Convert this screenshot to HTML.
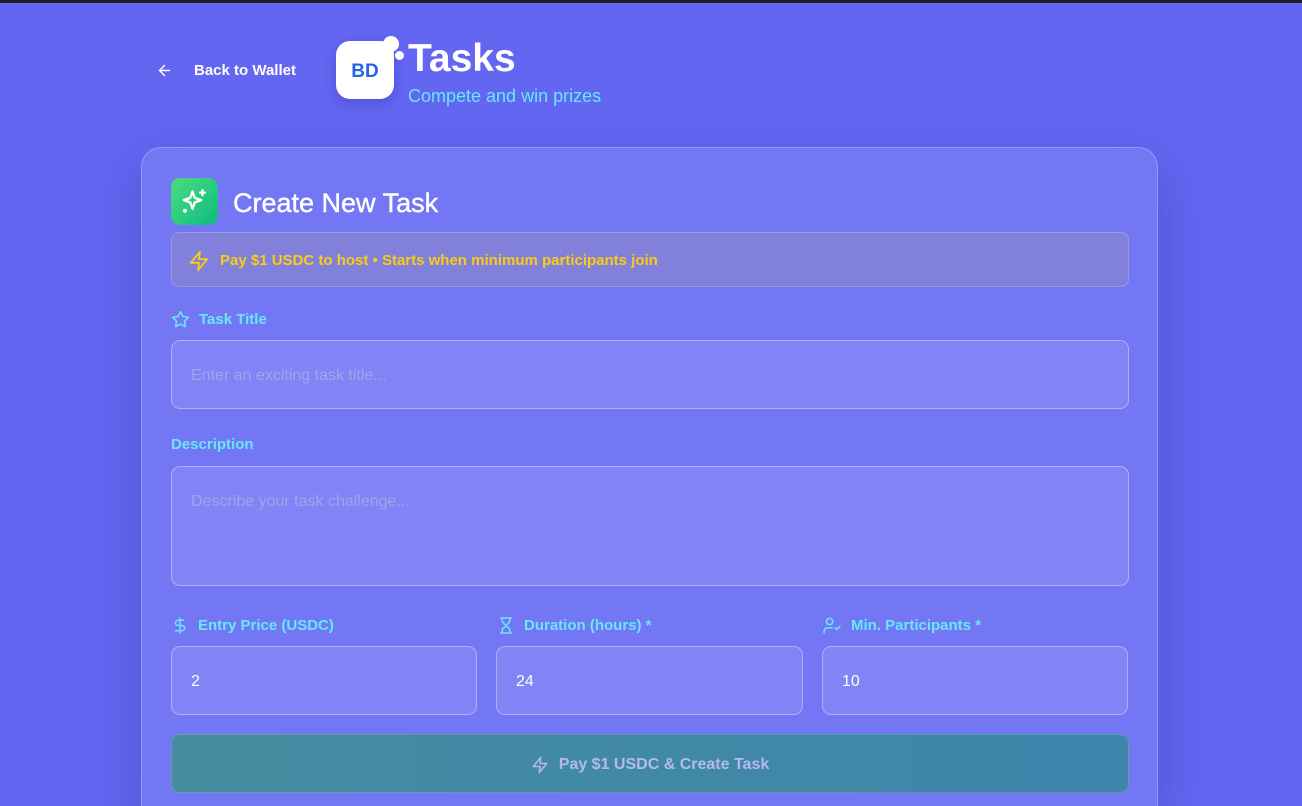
<!DOCTYPE html>
<html style="width:1302px;height:806px;overflow:hidden"><head><meta charset="utf-8"><style>
*{box-sizing:border-box;margin:0;padding:0}
body{width:1302px;height:806px;overflow:hidden;background:#6366f1;font-family:"Liberation Sans",sans-serif;position:relative}
.top{position:absolute;left:0;top:0;width:1302px;height:3px;background:#1f1f23}
.back{position:absolute;left:156px;top:62px;color:#fff;font-size:15px;font-weight:bold;display:flex;align-items:center}
.back svg{margin-right:21px}
.logo{position:absolute;left:336px;top:41px;width:58px;height:58px;background:#fff;border-radius:14px;box-shadow:0 4px 12px rgba(50,40,160,.35);color:#2563eb;font-weight:bold;font-size:19px;display:flex;align-items:center;justify-content:center;padding-top:3px}
.dot1{position:absolute;left:383px;top:36px;width:16px;height:16px;border-radius:50%;background:#fff}
.dot2{position:absolute;left:395px;top:51px;width:9px;height:9px;border-radius:50%;background:#fff}
.title{position:absolute;left:408px;top:37px;color:#fff;font-weight:bold;font-size:39px}
.sub{position:absolute;left:408px;top:86px;color:#67e8f9;font-size:18px}
.card{position:absolute;left:141px;top:147px;width:1017px;height:659px;background:#7377f3;border:1px solid rgba(255,255,255,.25);border-bottom:none;border-radius:20px 20px 0 0;box-shadow:0 20px 50px rgba(40,30,150,.3)}
.ico{position:absolute;left:171px;top:178px;width:47px;height:47px;border-radius:9px;background:linear-gradient(135deg,#4ade80,#10b981);display:flex;align-items:center;justify-content:center}
.h{position:absolute;left:233px;top:188px;color:#fff;font-size:27px;-webkit-text-stroke:.4px #fff}
.note{position:absolute;left:171px;top:232px;width:958px;height:55px;border:1px solid rgba(255,255,255,.2);background:#8180db;border-radius:8px;color:#facc15;font-weight:bold;font-size:15px;display:flex;align-items:center;padding-left:16px;padding-top:2px}
.note svg{margin-right:10px}
.lbl{position:absolute;color:#67e8f9;font-weight:bold;font-size:15px;display:flex;align-items:center}
.lbl svg{margin-right:9px}
.in{position:absolute;background:#8184f4;border:1px solid rgba(255,255,255,.35);border-radius:9px;color:#fff;font-size:16px;padding-left:19px;display:flex;align-items:center;padding-top:2px}
.ph{color:#a1a3f0}
.btn{position:absolute;left:171px;top:734px;width:958px;height:59px;border-radius:9px;background:linear-gradient(90deg,#458c9f,#3c86ac);border:1px solid rgba(255,255,255,.15);color:#b5b9ee;font-weight:bold;font-size:16px;display:flex;align-items:center;justify-content:center;padding-top:2px}
.btn svg{margin-right:10px}
</style></head><body>
<div class="top"></div>
<div class="back"><svg width="17" height="17" viewBox="0 0 24 24" fill="none" stroke="#fff" stroke-width="2" stroke-linecap="round"><path d="M19 12H5M12 19l-7-7 7-7"/></svg>Back to Wallet</div>
<div class="logo">BD</div><div class="dot1"></div><div class="dot2"></div>
<div class="title">Tasks</div>
<div class="sub">Compete and win prizes</div>
<div class="card"></div>
<div class="ico"><svg width="30" height="30" viewBox="0 0 24 24" fill="none" stroke="#fff" stroke-width="1.8" stroke-linecap="round" stroke-linejoin="round"><path d="M10 3.5l1.8 5.2 5.2 1.8-5.2 1.8L10 17.5l-1.8-5.2-5.2-1.8 5.2-1.8z"/><path d="M18 2.5v4M16 4.5h4"/><circle cx="4" cy="19" r=".7" fill="#fff"/></svg></div>
<div class="h">Create New Task</div>
<div class="note"><svg width="22" height="22" viewBox="0 0 24 24" fill="none" stroke="#facc15" stroke-width="2" stroke-linejoin="round"><path d="M13 2L3 14h9l-1 8 10-12h-9z"/></svg>Pay $1 USDC to host • Starts when minimum participants join</div>
<div class="lbl" style="left:171px;top:310px"><svg width="19" height="19" viewBox="0 0 24 24" fill="none" stroke="#67e8f9" stroke-width="2" stroke-linejoin="round"><path d="M12 2l3.1 6.3 6.9 1-5 4.9 1.2 6.8L12 17.8 5.8 21l1.2-6.8-5-4.9 6.9-1z"/></svg>Task Title</div>
<div class="in" style="left:171px;top:340px;width:958px;height:69px"><span class="ph">Enter an exciting task title...</span></div>
<div class="lbl" style="left:171px;top:436px">Description</div>
<div class="in" style="left:171px;top:466px;width:958px;height:120px;align-items:flex-start;padding-top:26px"><span class="ph">Describe your task challenge...</span></div>
<div class="lbl" style="left:171px;top:616px"><svg width="18" height="19" viewBox="0 0 24 24" fill="none" stroke="#67e8f9" stroke-width="2" stroke-linecap="round"><path d="M12 2v20M17 5H9.5a3.5 3.5 0 000 7h5a3.5 3.5 0 010 7H6"/></svg>Entry Price (USDC)</div>
<div class="lbl" style="left:497px;top:616px"><svg width="18" height="19" viewBox="0 0 24 24" fill="none" stroke="#67e8f9" stroke-width="2" stroke-linecap="round"><path d="M5 22h14M5 2h14M17 22v-4.2a2 2 0 00-.6-1.4L12 12l-4.4 4.4a2 2 0 00-.6 1.4V22M7 2v4.2a2 2 0 00.6 1.4L12 12l4.4-4.4a2 2 0 00.6-1.4V2"/></svg>Duration (hours) *</div>
<div class="lbl" style="left:822px;top:616px"><svg width="20" height="19" viewBox="0 0 24 24" fill="none" stroke="#67e8f9" stroke-width="2" stroke-linecap="round"><circle cx="9" cy="7" r="4"/><path d="M2 21v-2a4 4 0 014-4h6M16 15l2 2 4-4"/></svg>Min. Participants *</div>
<div class="in" style="left:171px;top:646px;width:306px;height:69px">2</div>
<div class="in" style="left:496px;top:646px;width:307px;height:69px">24</div>
<div class="in" style="left:822px;top:646px;width:306px;height:69px">10</div>
<div class="btn"><svg width="18" height="20" viewBox="0 0 24 24" fill="none" stroke="#b5b9ee" stroke-width="2" stroke-linejoin="round"><path d="M13 2L3 14h9l-1 8 10-12h-9z"/></svg>Pay $1 USDC &amp; Create Task</div>
</body></html>
